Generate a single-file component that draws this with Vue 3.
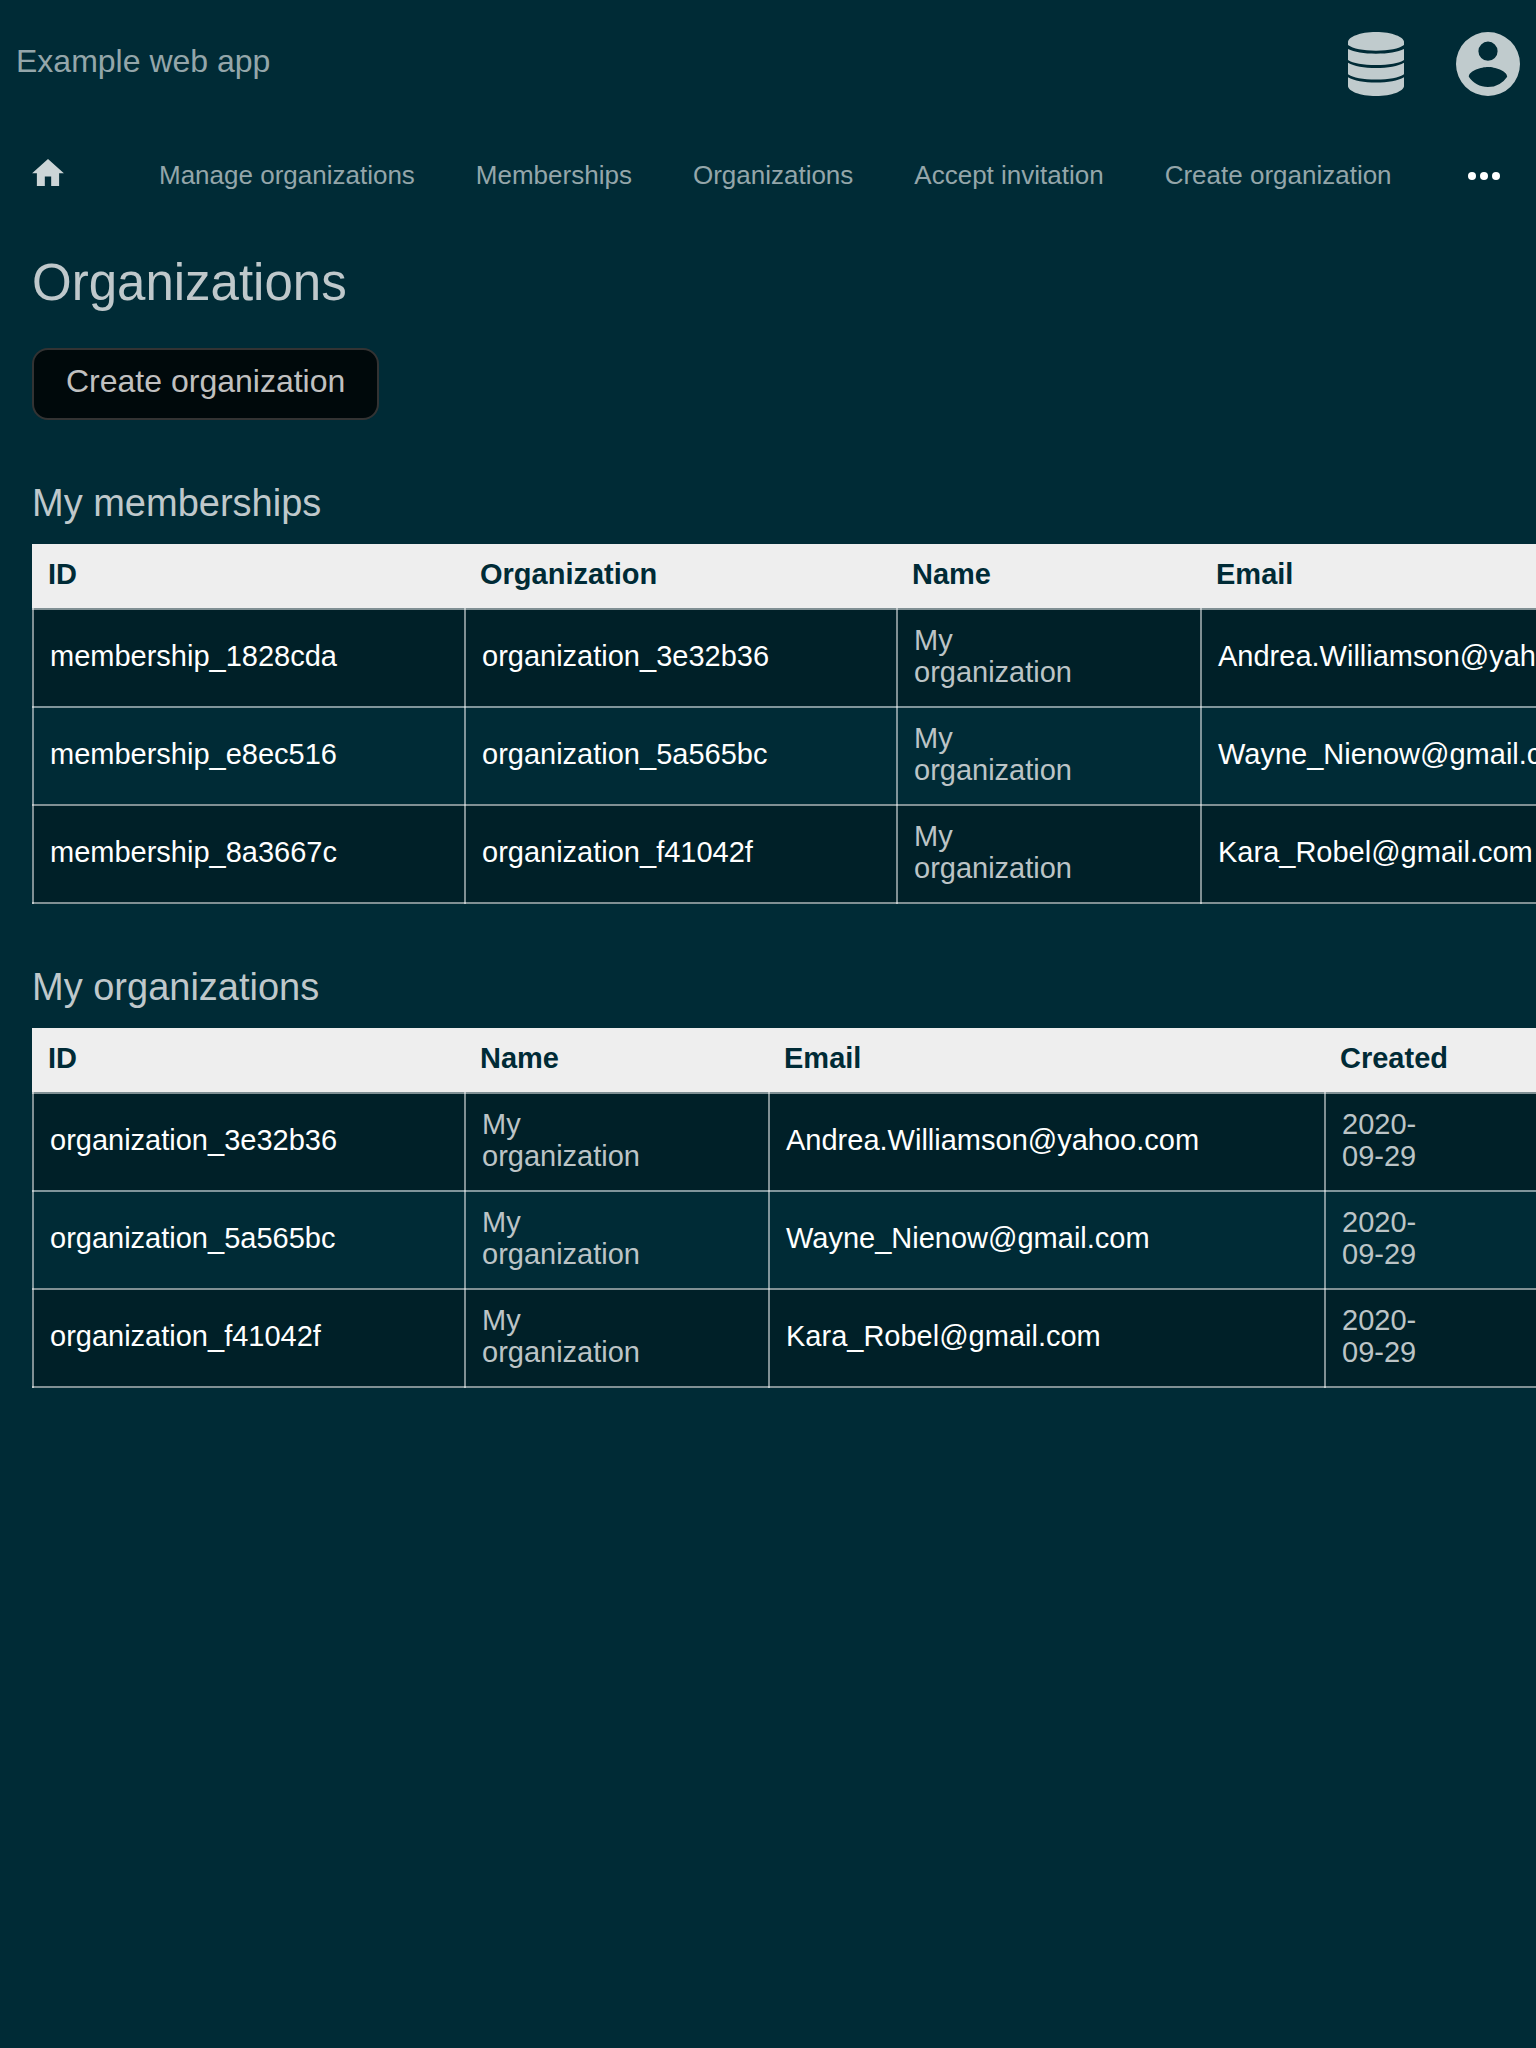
<script setup>
const navLinks = [
  'Manage organizations',
  'Memberships',
  'Organizations',
  'Accept invitation',
  'Create organization',
]

const columnTypes = {
  ID: 'id',
  Organization: 'id',
  Name: 'name',
  Email: 'email',
  Created: 'date',
}

const accounts = [
  { membership: 'membership_1828cda', organization: 'organization_3e32b36', email: 'Andrea.Williamson@yahoo.com' },
  { membership: 'membership_e8ec516', organization: 'organization_5a565bc', email: 'Wayne_Nienow@gmail.com' },
  { membership: 'membership_8a3667c', organization: 'organization_f41042f', email: 'Kara_Robel@gmail.com' },
]

const sections = [
  {
    key: 'memberships',
    title: 'My memberships',
    columns: ['ID', 'Organization', 'Name', 'Email'],
    rows: accounts.map((a) => [a.membership, a.organization, 'My organization', a.email]),
  },
  {
    key: 'organizations',
    title: 'My organizations',
    columns: ['ID', 'Name', 'Email', 'Created'],
    rows: accounts.map((a) => [a.organization, 'My organization', a.email, '2020-09-29']),
  },
]

const isLink = (column) => column !== 'Name' && column !== 'Created'
</script>

<template>
  <div class="app">
    <header class="topbar">
      <a class="brand" href="#">Example web app</a>
      <div class="topbar-actions">
        <button class="icon-button" type="button" aria-label="Administration">
          <svg width="56" height="64" viewBox="0 0 56 64" fill="currentColor" aria-hidden="true">
            <path d="M28 0C12 0 0 5 0 10v3c5 3.600 15 5.700 28 5.700S51 16.600 56 13v-3C56 5 44 0 28 0z" />
            <path d="M0 17c6 3 16 4.700 28 4.700S50 20 56 17v11c-5 3.200-15 5-28 5S5 31.200 0 28z" />
            <path d="M0 30.700C6 34 16 36 28 36s22-2 28-5.300v11.500c-5 3.300-15 5.300-28 5.300S5 45.500 0 42.200z" />
            <path d="M0 45.300c6 3.400 16 5.300 28 5.300s22-1.900 28-5.300V54c0 5-12 10-28 10S0 59 0 54z" />
          </svg>
        </button>
        <button class="icon-button" type="button" aria-label="Account">
          <svg width="64" height="64" viewBox="2 2 20 20" fill="currentColor" aria-hidden="true">
            <path
              d="M12 19.200c-2.500 0-4.710-1.280-6-3.220.03-1.990 4-3.080 6-3.080s5.970 1.090 6 3.080a7.230 7.230 0 0 1-6 3.220M12 5a3 3 0 0 1 3 3 3 3 0 0 1-3 3 3 3 0 0 1-3-3 3 3 0 0 1 3-3m0-3A10 10 0 0 0 2 12a10 10 0 0 0 10 10 10 10 0 0 0 10-10A10 10 0 0 0 12 2z"
            />
          </svg>
        </button>
      </div>
    </header>

    <nav class="navbar" aria-label="Main">
      <a class="home" href="#" aria-label="Home">
        <svg width="32" height="27" viewBox="2 3 20 17" fill="currentColor" aria-hidden="true">
          <path d="M10 20v-6h4v6h5v-8h3L12 3 2 12h3v8z" />
        </svg>
      </a>
      <a v-for="label in navLinks" :key="label" class="nav-link" href="#">{{ label }}</a>
      <button class="icon-button more" type="button" aria-label="More">
        <svg width="32" height="8" viewBox="0 0 32 8" fill="currentColor" aria-hidden="true">
          <circle cx="4" cy="4" r="4" />
          <circle cx="16" cy="4" r="4" />
          <circle cx="28" cy="4" r="4" />
        </svg>
      </button>
    </nav>

    <main class="content">
      <h1>Organizations</h1>
      <button class="create" type="button">Create organization</button>

      <section v-for="section in sections" :key="section.key">
        <h2 :id="section.key">{{ section.title }}</h2>
        <div class="table-scroll">
          <table :aria-labelledby="section.key">
            <colgroup>
              <col v-for="column in section.columns" :key="column" :class="columnTypes[column]" />
            </colgroup>
            <thead>
              <tr>
                <th v-for="column in section.columns" :key="column" scope="col">{{ column }}</th>
              </tr>
            </thead>
            <tbody>
              <tr v-for="row in section.rows" :key="row[0]">
                <td v-for="(value, i) in row" :key="i">
                  <a v-if="isLink(section.columns[i])" href="#">{{ value }}</a>
                  <div v-else class="narrow">{{ value }}</div>
                </td>
              </tr>
            </tbody>
          </table>
        </div>
      </section>
    </main>
  </div>
</template>

<style>
body {
  background: #002b36;
}
</style>

<style scoped>
.app {
  --paper: #002b36;
  --text: #bfc8cb;
  --faint: #94a6aa;
  --line: rgba(255, 255, 255, 0.5);
  min-height: 100vh;
  overflow-x: hidden;
  background: var(--paper);
  color: var(--text);
  font-family: "Liberation Sans", Arial, sans-serif;
  font-size: 32px;
}

a {
  color: inherit;
  text-decoration: none;
}

.topbar {
  display: flex;
  align-items: center;
  justify-content: space-between;
  padding: 32px 16px;
}

.brand {
  padding-bottom: 6px;
  color: var(--faint);
}

.topbar-actions {
  display: flex;
  gap: 52px;
}

.icon-button {
  display: flex;
  padding: 0;
  border: 0;
  background: none;
  color: #c0cbcd;
  cursor: pointer;
}

.navbar {
  display: flex;
  align-items: center;
  gap: 61px;
  min-height: 96px;
  padding: 0 36px 0 32px;
}

.home {
  display: flex;
  padding: 0 34px 8px 0;
  color: #ccd5d7;
}

.nav-link {
  padding-bottom: 2px;
  color: var(--faint);
  font-size: 26px;
  line-height: 32px;
  white-space: nowrap;
}

.more {
  margin-left: auto;
  color: #fff;
}

.content {
  padding: 28px 0 64px 32px;
}

h1,
h2 {
  margin: 0;
  font-weight: 400;
}

h1 {
  font-size: 51px;
  line-height: 62px;
}

h2 {
  margin: 60px 0 18px;
  font-size: 38px;
  line-height: 46px;
}

.create {
  display: block;
  margin-top: 34px;
  padding: 13px 32px 19px;
  border: 2px solid #333;
  border-radius: 16px;
  background: #00090b;
  color: #c0c0c0;
  font: inherit;
  line-height: 36px;
  cursor: pointer;
}

.table-scroll {
  overflow-x: auto;
  scrollbar-width: none;
}

table {
  width: max-content;
  table-layout: fixed;
  border-spacing: 0;
  font-size: 29px;
  line-height: 32px;
}

.id {
  width: 432px;
}

.name,
.date {
  width: 304px;
}

.email {
  width: 556px;
}

th {
  padding: 14px 16px 18px;
  background: #eee;
  color: var(--paper);
  text-align: left;
}

/* Translucent rules drawn as layers, so they brighten where they cross. */
td {
  padding: 16px 16px 18px 18px;
  background:
    linear-gradient(var(--line), var(--line)) top / 100% 2px no-repeat,
    linear-gradient(var(--line), var(--line)) left / 2px 100% no-repeat;
  color: #fff;
}

tbody tr:nth-child(odd) {
  background: #002028;
}

tbody tr:last-child td {
  padding-bottom: 20px;
  background:
    linear-gradient(var(--line), var(--line)) top / 100% 2px no-repeat,
    linear-gradient(var(--line), var(--line)) bottom / 100% 2px no-repeat,
    linear-gradient(var(--line), var(--line)) left / 2px 100% no-repeat;
}

.narrow {
  width: 112px;
  color: #bcc4c6;
}
</style>
